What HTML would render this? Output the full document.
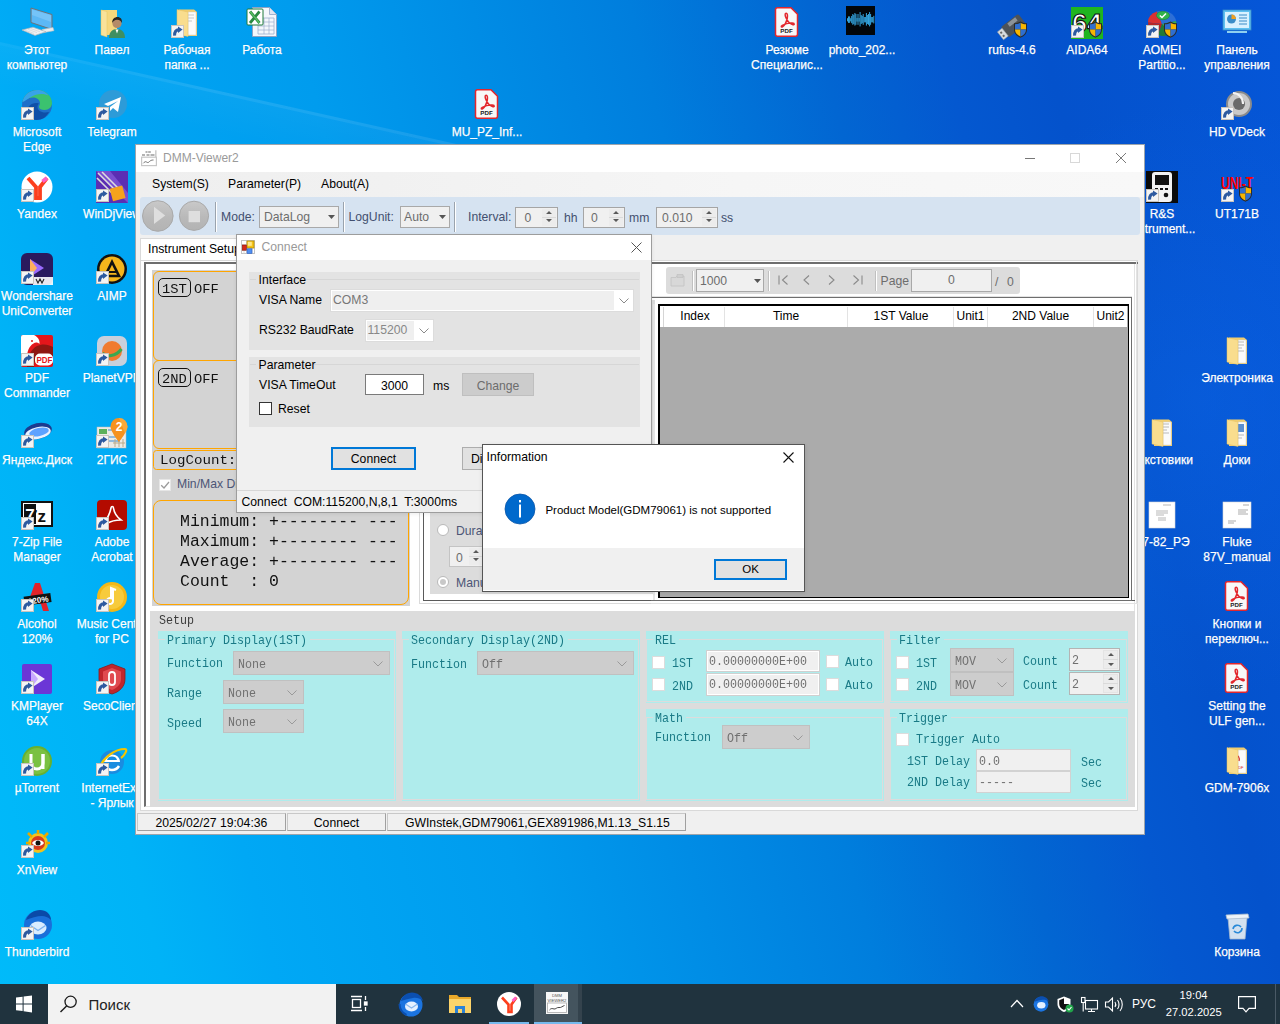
<!DOCTYPE html>
<html><head><meta charset="utf-8"><style>
html,body{margin:0;padding:0;}
body{width:1280px;height:1024px;overflow:hidden;position:relative;font-family:'Liberation Sans',sans-serif;
background:linear-gradient(75.6deg,#00bbfa 0px,#00b3f7 170px,#00a8f5 279px,#009cee 535px,#007edd 863px,#0266d2 1037px,#0458d0 1155px,#0452cc 1255px,#0556d8 1495px);}
.t{position:absolute;white-space:pre;}
.r{position:absolute;box-sizing:border-box;}
.lbl{position:absolute;width:76px;text-align:center;color:#fff;font-size:12px;line-height:15px;font-family:'Liberation Sans',sans-serif;text-shadow:0 0 1px rgba(0,0,0,.12);-webkit-text-stroke:.25px #fff;}
.ic{position:absolute;width:32px;height:32px;}
svg{position:absolute;overflow:visible;}
</style></head><body>
<div class="r" style="left:900px;top:100px;width:600px;height:600px;background:radial-gradient(closest-side,rgba(20,120,255,.22),rgba(20,120,255,0));"></div><div class="r" style="left:0px;top:42px;width:520px;height:3px;background:linear-gradient(90deg,rgba(255,255,255,.06),rgba(255,255,255,.11) 40%,rgba(255,255,255,.09));transform-origin:0 0;transform:rotate(12.6deg);filter:blur(.7px);"></div><div class="r" style="left:0px;top:45px;width:520px;height:40px;background:linear-gradient(180deg,rgba(255,255,255,.035),rgba(255,255,255,0));transform-origin:0 0;transform:rotate(12.6deg);"></div><svg style="left:21px;top:7px" width="32" height="32" viewBox="0 0 32 32"><path d="M10 1L31 7.5V22.5L10 15.5z" fill="#5cb8f5" stroke="#6d7378" stroke-width="1"/><path d="M11 2.5L30 8.3V15L11 8z" fill="#8ed0fb" opacity=".5"/><path d="M21 22.5l11-2 1 3.2-11 2z" fill="#e9ecee" stroke="#b9bec2" stroke-width=".6"/><path d="M1 23l11-2.8 13 4.6-11 3.6z" fill="#eef0f2" stroke="#aeb3b8" stroke-width=".7"/><path d="M4 23.2l9 3.2M7 22.4l9 3.2M10 21.6l9 3.2" stroke="#c4c8cc" stroke-width=".5"/></svg><div class="lbl" style="left:-1px;top:42.7px;">Этот<br>компьютер</div><svg style="left:96px;top:7px" width="32" height="32" viewBox="0 0 32 32"><path d="M5 3h16v25H5z" fill="#f6d77c"/><path d="M5 3l6 1.5V30L5 28z" fill="#f9e29a" stroke="#e6c45e" stroke-width=".5"/><path d="M13 31c0-6 3.5-9 8-9s8 3 8 9z" fill="#3f8f61"/><path d="M19.5 22.5l1.5 4 1.5-4z" fill="#fff"/><circle cx="21" cy="16.5" r="4.6" fill="#b48b68"/><path d="M16.2 16c-.3-4 2.5-6 5.3-6 3 0 5 2.3 4.4 6-.7-1.8-2-3-4.7-3.2-2.3-.1-4 1.2-5 3.2z" fill="#2a2420"/></svg><div class="lbl" style="left:74px;top:42.7px;">Павел</div><svg style="left:171px;top:7px" width="32" height="32" viewBox="0 0 32 32"><path d="M8 2.5h15l3 2.5V29H8z" fill="#f1cd6e"/><path d="M17 5h8v23h-8z" fill="#fbfbfb" stroke="#cfcfcf" stroke-width=".5"/><path d="M14 8h9M14 11h9M14 14h7" stroke="#bbb" stroke-width=".8"/><path d="M6 2.6L17 5V29.5L6 27z" fill="#f9dd8e" stroke="#e5c062" stroke-width=".5"/><rect x="0.5" y="18.5" width="12" height="12" fill="#f4f4f4" stroke="#c9c4be"/><path d="M3.6 28.6C3.4 24.6 5.2 22.7 8.2 22.4" stroke="#2d5aa0" stroke-width="3" fill="none"/><path d="M7 19.4L11.6 22.6L7 26Z" fill="#2d5aa0"/></svg><div class="lbl" style="left:149px;top:42.7px;">Рабочая<br>папка ...</div><svg style="left:246px;top:7px" width="32" height="32" viewBox="0 0 32 32"><path d="M6.5 .5h17l7 7v22h-24z" fill="#f4f7fc" stroke="#8fa3c4" stroke-width="1"/><path d="M23.5 .5v7h7" fill="#dfe6f2" stroke="#8fa3c4" stroke-width=".8"/><path d="M12 11h16v16H12z" fill="none" stroke="#9db0cf" stroke-width=".8"/><path d="M12 15h16M12 19h16M12 23h16M18 11v16M23 11v16" stroke="#9db0cf" stroke-width=".7"/><rect x="1" y="2" width="16" height="16" rx="1" fill="#fff" stroke="#1f7a3a" stroke-width="1"/><path d="M4 4.5l9.5 11.5M13.5 4.5L4 16" stroke="#2a8a42" stroke-width="2.8"/><path d="M4 4.5l9.5 11.5" stroke="#5cbf63" stroke-width="1.3"/></svg><div class="lbl" style="left:224px;top:42.7px;">Работа</div><svg style="left:21px;top:89px" width="32" height="32" viewBox="0 0 32 32"><circle cx="16" cy="16" r="15" fill="#1e6fc8"/><path d="M1.5 13C3 5 10 1 16.5 1c8.5 0 14.5 6.5 14.5 13 0 4-3 7-7.5 7-3 0-5.5-1-5.5-3 0-1.5 1-2 1-4 0-3-3-5.5-7-5.5-5 0-9.5 3.5-10.5 4.5z" fill="#3bc26f"/><path d="M1.5 13C3 5 10 1 16.5 1c5 0 9 2.5 11 5.5C23 4 15 4.5 10 8 6 10 3 13 1.5 13z" fill="#38a3e8"/><path d="M6 23c0-5 4-9 9-9 2 0 3 .5 3 .5-1 1-1.5 2-1.5 3.5 0 3 3 5.5 8 5.5 1 0 2.5-.2 3.5-.5-2.5 5-7 8-12.5 8C10 31 6 27 6 23z" fill="#0f4fa8"/><rect x="0.5" y="18.5" width="12" height="12" fill="#f4f4f4" stroke="#c9c4be"/><path d="M3.6 28.6C3.4 24.6 5.2 22.7 8.2 22.4" stroke="#2d5aa0" stroke-width="3" fill="none"/><path d="M7 19.4L11.6 22.6L7 26Z" fill="#2d5aa0"/></svg><div class="lbl" style="left:-1px;top:124.7px;">Microsoft<br>Edge</div><svg style="left:96px;top:89px" width="32" height="32" viewBox="0 0 32 32"><circle cx="17" cy="15" r="14" fill="#2d9bd8"/><path d="M8 15l17-7-3 15-5-4-3 3v-4l8-6-10 5z" fill="#fff"/><rect x="0.5" y="18.5" width="12" height="12" fill="#f4f4f4" stroke="#c9c4be"/><path d="M3.6 28.6C3.4 24.6 5.2 22.7 8.2 22.4" stroke="#2d5aa0" stroke-width="3" fill="none"/><path d="M7 19.4L11.6 22.6L7 26Z" fill="#2d5aa0"/></svg><div class="lbl" style="left:74px;top:124.7px;">Telegram</div><svg style="left:471px;top:89px" width="32" height="32" viewBox="0 0 32 32"><path d="M6.5 .8h13.5l6.5 6.5v19.9a2 2 0 0 1-2 2H6.5a2 2 0 0 1-2-2V2.8a2 2 0 0 1 2-2z" fill="#f8f8f8" stroke="#e3262c" stroke-width="1.5"/><path d="M15 6.3c-1.3.1-1.1 2.4.3 5.2 1.6 3.1 4.1 5.6 6.6 6.2 1.6.4 1.9-1.3-.2-1.6-3-.5-7.2.5-10.4 2.4-1.6 1-1.2 2.3.4 1.1 2.1-1.7 4-5.3 4.6-8.6.4-2.4.2-4.8-1.3-4.7z" fill="none" stroke="#e3262c" stroke-width="1.5"/><text x="15.5" y="26" font-family="Liberation Sans" font-size="6.2" font-weight="bold" text-anchor="middle" fill="#222">PDF</text></svg><div class="lbl" style="left:449px;top:124.7px;">MU_PZ_Inf...</div><svg style="left:21px;top:171px" width="32" height="32" viewBox="0 0 32 32"><circle cx="16" cy="16" r="15.5" fill="#fff"/><path d="M7 7l8 9v11h4V16l7-9" stroke="#fc3f1d" stroke-width="3.8" fill="none"/><path d="M21.5 10.5L26 7" stroke="#ff5fc8" stroke-width="3.8"/><rect x="0.5" y="18.5" width="12" height="12" fill="#f4f4f4" stroke="#c9c4be"/><path d="M3.6 28.6C3.4 24.6 5.2 22.7 8.2 22.4" stroke="#2d5aa0" stroke-width="3" fill="none"/><path d="M7 19.4L11.6 22.6L7 26Z" fill="#2d5aa0"/></svg><div class="lbl" style="left:-1px;top:206.7px;">Yandex</div><svg style="left:96px;top:171px" width="32" height="32" viewBox="0 0 32 32"><rect x="0" y="0" width="32" height="32" fill="#5b2eb3"/><path d="M0 0h14L32 22V32L0 0z" fill="#7a4fd0"/><path d="M2 2l16 16M6 1l16 16M1 7l15 15" stroke="#ddd" stroke-width="1.6"/><rect x="15" y="16" width="13" height="13" transform="rotate(-15 21 22)" fill="#f5a21c"/><rect x="0.5" y="18.5" width="12" height="12" fill="#f4f4f4" stroke="#c9c4be"/><path d="M3.6 28.6C3.4 24.6 5.2 22.7 8.2 22.4" stroke="#2d5aa0" stroke-width="3" fill="none"/><path d="M7 19.4L11.6 22.6L7 26Z" fill="#2d5aa0"/></svg><div class="lbl" style="left:74px;top:206.7px;">WinDjView</div><svg style="left:21px;top:253px" width="32" height="32" viewBox="0 0 32 32"><rect x="0" y="0" width="32" height="32" rx="6" fill="#2a1a5e"/><path d="M9 6l14 9-14 9z" fill="#9b6bff"/><path d="M9 6l7 9-7 9z" fill="#ffb05c"/><path d="M0 26h32v6H0z" fill="#f0f0f0" opacity=".0"/><path d="M14 27l2 3 2-3 2 3 2-3" stroke="#111" stroke-width="1.2" fill="none"/><path d="M12 24h20v8H12z" fill="#fff" opacity=".9"/><path d="M15 26l2 4 2-4 2 4 2-4" stroke="#222" stroke-width="1.1" fill="none"/><rect x="0.5" y="18.5" width="12" height="12" fill="#f4f4f4" stroke="#c9c4be"/><path d="M3.6 28.6C3.4 24.6 5.2 22.7 8.2 22.4" stroke="#2d5aa0" stroke-width="3" fill="none"/><path d="M7 19.4L11.6 22.6L7 26Z" fill="#2d5aa0"/></svg><div class="lbl" style="left:-1px;top:288.7px;">Wondershare<br>UniConverter</div><svg style="left:96px;top:253px" width="32" height="32" viewBox="0 0 32 32"><circle cx="16" cy="16" r="15" fill="#111"/><circle cx="16" cy="16" r="12.5" fill="#f5b51c"/><path d="M9 23L16 9l7 14z" fill="none" stroke="#111" stroke-width="2.6"/><path d="M12 19h8" stroke="#111" stroke-width="2"/><rect x="0.5" y="18.5" width="12" height="12" fill="#f4f4f4" stroke="#c9c4be"/><path d="M3.6 28.6C3.4 24.6 5.2 22.7 8.2 22.4" stroke="#2d5aa0" stroke-width="3" fill="none"/><path d="M7 19.4L11.6 22.6L7 26Z" fill="#2d5aa0"/></svg><div class="lbl" style="left:74px;top:288.7px;">AIMP</div><svg style="left:21px;top:335px" width="32" height="32" viewBox="0 0 32 32"><rect x="0" y="0" width="32" height="32" rx="2" fill="#e3161b"/><path d="M0 2a2 2 0 0 1 2-2h11c4 2 6 5 5.5 9-1.5-1.5-4-2-6-.5C8 11 6 17 6 22H0z" fill="#fff"/><path d="M6 32c0-10 4-18 10-21 5-2.5 11-2 16 1V22c-4-4-10-4-14-1-3 2-5 6-5 11z" fill="#8e1712"/><circle cx="11" cy="6" r=".9" fill="#d00"/><rect x="14" y="18.5" width="18" height="12" rx="5" fill="#fff"/><text x="23.5" y="28.3" font-family="Liberation Sans" font-weight="bold" font-size="9" text-anchor="middle" fill="#e3161b" textLength="16" lengthAdjust="spacingAndGlyphs">PDF</text><rect x="0.5" y="18.5" width="12" height="12" fill="#f4f4f4" stroke="#c9c4be"/><path d="M3.6 28.6C3.4 24.6 5.2 22.7 8.2 22.4" stroke="#2d5aa0" stroke-width="3" fill="none"/><path d="M7 19.4L11.6 22.6L7 26Z" fill="#2d5aa0"/></svg><div class="lbl" style="left:-1px;top:370.7px;">PDF<br>Commander</div><svg style="left:96px;top:335px" width="32" height="32" viewBox="0 0 32 32"><rect x="1" y="1" width="30" height="30" rx="7" fill="#c8d0dc"/><circle cx="16" cy="16" r="10" fill="#f07b30"/><path d="M6.5 18c4 4 13 4 19-4" stroke="#3aa850" stroke-width="3" fill="none"/><rect x="0.5" y="18.5" width="12" height="12" fill="#f4f4f4" stroke="#c9c4be"/><path d="M3.6 28.6C3.4 24.6 5.2 22.7 8.2 22.4" stroke="#2d5aa0" stroke-width="3" fill="none"/><path d="M7 19.4L11.6 22.6L7 26Z" fill="#2d5aa0"/></svg><div class="lbl" style="left:74px;top:370.7px;">PlanetVPN</div><svg style="left:21px;top:417px" width="32" height="32" viewBox="0 0 32 32"><ellipse cx="17" cy="14" rx="14" ry="8" transform="rotate(-12 17 14)" fill="#1c3b8f"/><ellipse cx="17" cy="16" rx="13" ry="6" transform="rotate(-12 17 16)" fill="#e9f2ff"/><ellipse cx="18" cy="15" rx="10" ry="4" transform="rotate(-12 18 15)" fill="#5ea2ff"/><rect x="0.5" y="18.5" width="12" height="12" fill="#f4f4f4" stroke="#c9c4be"/><path d="M3.6 28.6C3.4 24.6 5.2 22.7 8.2 22.4" stroke="#2d5aa0" stroke-width="3" fill="none"/><path d="M7 19.4L11.6 22.6L7 26Z" fill="#2d5aa0"/></svg><div class="lbl" style="left:-1px;top:452.7px;">Яндекс.Диск</div><svg style="left:96px;top:417px" width="32" height="32" viewBox="0 0 32 32"><rect x="1" y="10" width="29" height="21" fill="#ecebe6" stroke="#bbb" stroke-width=".5"/><path d="M3 12h8v5H3z" fill="#5cb05c"/><path d="M12 13h10M8 20h14M4 24h20" stroke="#3a8ad0" stroke-width="1.2"/><path d="M17 26h12M19 22v8M23 22v8M27 22v8" stroke="#b9a98a" stroke-width="1"/><path d="M23 1a8.5 8.5 0 0 1 8.5 8.5c0 5-8.5 15.5-8.5 15.5S14.5 14.5 14.5 9.5A8.5 8.5 0 0 1 23 1z" fill="#f6921e"/><path d="M23 1a8.5 8.5 0 0 1 8.5 8.5c0 2-1 4.5-2.5 7" fill="#fdb94a" opacity=".6"/><text x="23" y="14" font-family="Liberation Sans" font-weight="bold" font-size="12" text-anchor="middle" fill="#fff">2</text><rect x="0.5" y="18.5" width="12" height="12" fill="#f4f4f4" stroke="#c9c4be"/><path d="M3.6 28.6C3.4 24.6 5.2 22.7 8.2 22.4" stroke="#2d5aa0" stroke-width="3" fill="none"/><path d="M7 19.4L11.6 22.6L7 26Z" fill="#2d5aa0"/></svg><div class="lbl" style="left:74px;top:452.7px;">2ГИС</div><svg style="left:21px;top:499px" width="32" height="32" viewBox="0 0 32 32"><rect x="1" y="3" width="30" height="24" fill="#fff" stroke="#111" stroke-width="2"/><text x="16" y="23" font-family="Liberation Sans" font-weight="bold" font-size="17" text-anchor="middle" fill="#111">7z</text><rect x="3" y="5" width="12" height="20" fill="#111"/><text x="9" y="22" font-family="Liberation Sans" font-weight="bold" font-size="17" text-anchor="middle" fill="#fff">7</text><rect x="0.5" y="18.5" width="12" height="12" fill="#f4f4f4" stroke="#c9c4be"/><path d="M3.6 28.6C3.4 24.6 5.2 22.7 8.2 22.4" stroke="#2d5aa0" stroke-width="3" fill="none"/><path d="M7 19.4L11.6 22.6L7 26Z" fill="#2d5aa0"/></svg><div class="lbl" style="left:-1px;top:534.7px;">7-Zip File<br>Manager</div><svg style="left:96px;top:499px" width="32" height="32" viewBox="0 0 32 32"><rect x="1" y="1" width="30" height="30" rx="4" fill="#b30b00"/><path d="M8 24c3-4 6-10 7-15 .3-2 2.3-2 2.5 0 .5 4 3.5 9 7.5 12-4 0-10 1-14 3.5-2 1.2-4 .5-3-.5z" fill="none" stroke="#fff" stroke-width="1.6"/><rect x="0.5" y="18.5" width="12" height="12" fill="#f4f4f4" stroke="#c9c4be"/><path d="M3.6 28.6C3.4 24.6 5.2 22.7 8.2 22.4" stroke="#2d5aa0" stroke-width="3" fill="none"/><path d="M7 19.4L11.6 22.6L7 26Z" fill="#2d5aa0"/></svg><div class="lbl" style="left:74px;top:534.7px;">Adobe<br>Acrobat</div><svg style="left:21px;top:581px" width="32" height="32" viewBox="0 0 32 32"><path d="M4 30L14 2h5l9 28h-6l-2-7H12l-2 7z" fill="#e2232a"/><rect x="3" y="14" width="27" height="9" fill="#111" transform="rotate(-8 16 18)"/><text x="17" y="22" font-family="Liberation Sans" font-weight="bold" font-size="8" text-anchor="middle" fill="#fff" transform="rotate(-8 16 18)">120%</text><rect x="0.5" y="18.5" width="12" height="12" fill="#f4f4f4" stroke="#c9c4be"/><path d="M3.6 28.6C3.4 24.6 5.2 22.7 8.2 22.4" stroke="#2d5aa0" stroke-width="3" fill="none"/><path d="M7 19.4L11.6 22.6L7 26Z" fill="#2d5aa0"/></svg><div class="lbl" style="left:-1px;top:616.7px;">Alcohol<br>120%</div><svg style="left:96px;top:581px" width="32" height="32" viewBox="0 0 32 32"><circle cx="16" cy="16" r="15" fill="#f3b818"/><circle cx="16" cy="16" r="12" fill="#f7cb3c"/><path d="M17 7v13a3 3 0 1 1-2-2.8V7l5 2" stroke="#fff" stroke-width="2" fill="none"/><rect x="0.5" y="18.5" width="12" height="12" fill="#f4f4f4" stroke="#c9c4be"/><path d="M3.6 28.6C3.4 24.6 5.2 22.7 8.2 22.4" stroke="#2d5aa0" stroke-width="3" fill="none"/><path d="M7 19.4L11.6 22.6L7 26Z" fill="#2d5aa0"/></svg><div class="lbl" style="left:74px;top:616.7px;">Music Center<br>for PC</div><svg style="left:21px;top:663px" width="32" height="32" viewBox="0 0 32 32"><rect x="1" y="1" width="30" height="30" rx="2" fill="#6b36d6"/><path d="M10 7l14 9-14 9z" fill="#fff" opacity=".9"/><path d="M10 7l7 9-7 9z" fill="#c9a8ff"/><rect x="0.5" y="18.5" width="12" height="12" fill="#f4f4f4" stroke="#c9c4be"/><path d="M3.6 28.6C3.4 24.6 5.2 22.7 8.2 22.4" stroke="#2d5aa0" stroke-width="3" fill="none"/><path d="M7 19.4L11.6 22.6L7 26Z" fill="#2d5aa0"/></svg><div class="lbl" style="left:-1px;top:698.7px;">KMPlayer<br>64X</div><svg style="left:96px;top:663px" width="32" height="32" viewBox="0 0 32 32"><path d="M16 1l13 5v10c0 8-6 13-13 15C9 29 3 24 3 16V6z" fill="#c0262d" stroke="#8a1a1a" stroke-width=".8"/><path d="M16 5l9 3.5V16c0 5.5-4 9-9 11-5-2-9-5.5-9-11V8.5z" fill="#e04a50"/><rect x="13" y="9" width="6" height="13" rx="3" fill="none" stroke="#fff" stroke-width="1.8"/><rect x="0.5" y="18.5" width="12" height="12" fill="#f4f4f4" stroke="#c9c4be"/><path d="M3.6 28.6C3.4 24.6 5.2 22.7 8.2 22.4" stroke="#2d5aa0" stroke-width="3" fill="none"/><path d="M7 19.4L11.6 22.6L7 26Z" fill="#2d5aa0"/></svg><div class="lbl" style="left:74px;top:698.7px;">SecoClient</div><svg style="left:21px;top:745px" width="32" height="32" viewBox="0 0 32 32"><circle cx="16" cy="16" r="15" fill="#68b030"/><circle cx="16" cy="16" r="13" fill="#7ac142"/><path d="M10 9v9a6 6 0 0 0 12 0V9" stroke="#fff" stroke-width="3" fill="none"/><path d="M22 9v15" stroke="#fff" stroke-width="3"/><rect x="0.5" y="18.5" width="12" height="12" fill="#f4f4f4" stroke="#c9c4be"/><path d="M3.6 28.6C3.4 24.6 5.2 22.7 8.2 22.4" stroke="#2d5aa0" stroke-width="3" fill="none"/><path d="M7 19.4L11.6 22.6L7 26Z" fill="#2d5aa0"/></svg><div class="lbl" style="left:-1px;top:780.7px;">µTorrent</div><svg style="left:96px;top:745px" width="32" height="32" viewBox="0 0 32 32"><circle cx="16" cy="17" r="12" fill="#1a8ce0"/><path d="M8 17h16c0-4.5-3.5-7.5-8-7.5S8 12.5 8 17z" fill="#fff"/><path d="M11 15h10c-.5-2.5-2.5-3.5-5-3.5s-4.5 1-5 3.5z" fill="#1a8ce0"/><path d="M9 21c2 3 4.5 4 7 4 3 0 5.5-1.5 7-4" stroke="#fff" stroke-width="2.5" fill="none"/><path d="M3 25C6 12 20 4 29 4c3 0 0 6-4 9" stroke="#f5c400" stroke-width="2.2" fill="none"/><rect x="0.5" y="18.5" width="12" height="12" fill="#f4f4f4" stroke="#c9c4be"/><path d="M3.6 28.6C3.4 24.6 5.2 22.7 8.2 22.4" stroke="#2d5aa0" stroke-width="3" fill="none"/><path d="M7 19.4L11.6 22.6L7 26Z" fill="#2d5aa0"/></svg><div class="lbl" style="left:74px;top:780.7px;">InternetExp<br>- Ярлык</div><svg style="left:21px;top:827px" width="32" height="32" viewBox="0 0 32 32"><circle cx="17" cy="16" r="10" fill="#f3c21c"/><path d="M7 6l4 4M27 6l-4 4M5 16h4M25 16h4M17 3v4" stroke="#e8a800" stroke-width="2.5"/><circle cx="17" cy="16" r="7" fill="#d73b1f"/><path d="M11 16c2-4 10-4 12 0-2 4-10 4-12 0z" fill="#fff"/><circle cx="17" cy="16" r="2.5" fill="#111"/><rect x="0.5" y="18.5" width="12" height="12" fill="#f4f4f4" stroke="#c9c4be"/><path d="M3.6 28.6C3.4 24.6 5.2 22.7 8.2 22.4" stroke="#2d5aa0" stroke-width="3" fill="none"/><path d="M7 19.4L11.6 22.6L7 26Z" fill="#2d5aa0"/></svg><div class="lbl" style="left:-1px;top:862.7px;">XnView</div><svg style="left:21px;top:909px" width="32" height="32" viewBox="0 0 32 32"><circle cx="17" cy="16" r="14" fill="#1a6fd9"/><path d="M5 11c2-6 8-10 14-10 6 0 11 4 11 10-3-3-6-4-9-4-5 0-11 2-16 4z" fill="#0a4aa8"/><ellipse cx="17" cy="19" rx="8.5" ry="6.5" fill="#d9ecff"/><path d="M9.5 16.5l7.5 5 7.5-5" stroke="#7ab2f0" stroke-width="1.4" fill="none"/><rect x="0.5" y="18.5" width="12" height="12" fill="#f4f4f4" stroke="#c9c4be"/><path d="M3.6 28.6C3.4 24.6 5.2 22.7 8.2 22.4" stroke="#2d5aa0" stroke-width="3" fill="none"/><path d="M7 19.4L11.6 22.6L7 26Z" fill="#2d5aa0"/></svg><div class="lbl" style="left:-1px;top:944.7px;">Thunderbird</div><svg style="left:771px;top:7px" width="32" height="32" viewBox="0 0 32 32"><path d="M6.5 .8h13.5l6.5 6.5v19.9a2 2 0 0 1-2 2H6.5a2 2 0 0 1-2-2V2.8a2 2 0 0 1 2-2z" fill="#f8f8f8" stroke="#e3262c" stroke-width="1.5"/><path d="M15 6.3c-1.3.1-1.1 2.4.3 5.2 1.6 3.1 4.1 5.6 6.6 6.2 1.6.4 1.9-1.3-.2-1.6-3-.5-7.2.5-10.4 2.4-1.6 1-1.2 2.3.4 1.1 2.1-1.7 4-5.3 4.6-8.6.4-2.4.2-4.8-1.3-4.7z" fill="none" stroke="#e3262c" stroke-width="1.5"/><text x="15.5" y="26" font-family="Liberation Sans" font-size="6.2" font-weight="bold" text-anchor="middle" fill="#222">PDF</text></svg><div class="lbl" style="left:749px;top:42.7px;">Резюме<br>Специалис...</div><svg style="left:846px;top:7px" width="32" height="32" viewBox="0 0 32 32"><defs><filter id="pb" x="-10%" y="-10%" width="120%" height="120%"><feGaussianBlur stdDeviation=".6"/></filter></defs><rect x="0" y="-1" width="29" height="29" fill="#02060a"/><path d="M1.5 11.2V14.4M2.5 9.4V15.9M3.6 9.4V15.9M4.7 11.2V14.4M5.7 9.0V16.2M6.8 7.0V17.8M7.8 8.0V17.0M8.9 6.0V18.6M9.9 7.0V17.8M11.0 11.0V14.6M12.0 7.0V17.8M13.1 11.0V14.6M14.1 5.0V19.4M15.2 8.0V17.0M16.2 9.0V16.2M17.2 7.0V17.8M18.3 10.0V15.4M19.4 10.0V15.4M20.4 6.0V18.6M21.4 8.0V17.0M22.5 7.0V17.8M23.6 5.0V19.4M24.6 7.0V17.8M25.7 10.0V15.4M26.7 10.0V15.4M27.8 8.8V16.4" stroke="#39b4f4" stroke-width=".9" filter="url(#pb)"/><path d="M1 13H28" stroke="#7fd4ff" stroke-width=".8" filter="url(#pb)"/></svg><div class="lbl" style="left:824px;top:42.7px;">photo_202...</div><svg style="left:996px;top:7px" width="32" height="32" viewBox="0 0 32 32"><g transform="rotate(-38 16 16)"><rect x="9" y="8" width="13" height="22" rx="2" transform="rotate(90 15.5 19)" fill="#4d5359"/><rect x="12" y="13.5" width="10" height="4" fill="#8c9399"/><rect x="-1" y="14" width="6" height="10" fill="#d7dbde" stroke="#9aa0a5" stroke-width=".5"/><rect x="0.5" y="16" width="2" height="2" fill="#666"/><rect x="0.5" y="20" width="2" height="2" fill="#666"/></g><path d="M24.5 14.5c2 1.3 4.3 1.8 6.5 1.8v6.2c0 4.2-2.8 6.8-6.5 8.2-3.7-1.4-6.5-4-6.5-8.2v-6.2c2.2 0 4.5-.5 6.5-1.8z" fill="#2a2a2a"/><path d="M24.5 15.8c1.8 1 3.8 1.5 5.5 1.5v5.2h-5.5z" fill="#f7b500"/><path d="M24.5 15.8c-1.8 1-3.8 1.5-5.5 1.5v5.2h5.5z" fill="#2f6fd0"/><path d="M19 22.5h5.5v7c-3-1.2-5.5-3.3-5.5-7z" fill="#f7b500"/><path d="M30 22.5h-5.5v7c3-1.2 5.5-3.3 5.5-7z" fill="#2f6fd0"/></svg><div class="lbl" style="left:974px;top:42.7px;">rufus-4.6</div><svg style="left:1071px;top:7px" width="32" height="32" viewBox="0 0 32 32"><rect x="0" y="0" width="32" height="32" fill="#1fb51f"/><text x="16" y="25" font-family="Liberation Sans" font-weight="bold" font-size="25" text-anchor="middle" fill="#fff" stroke="#111" stroke-width="1.1" textLength="30" lengthAdjust="spacingAndGlyphs">64</text><rect x="0.5" y="18.5" width="12" height="12" fill="#f4f4f4" stroke="#c9c4be"/><path d="M3.6 28.6C3.4 24.6 5.2 22.7 8.2 22.4" stroke="#2d5aa0" stroke-width="3" fill="none"/><path d="M7 19.4L11.6 22.6L7 26Z" fill="#2d5aa0"/><path d="M24.5 14.5c2 1.3 4.3 1.8 6.5 1.8v6.2c0 4.2-2.8 6.8-6.5 8.2-3.7-1.4-6.5-4-6.5-8.2v-6.2c2.2 0 4.5-.5 6.5-1.8z" fill="#2a2a2a"/><path d="M24.5 15.8c1.8 1 3.8 1.5 5.5 1.5v5.2h-5.5z" fill="#f7b500"/><path d="M24.5 15.8c-1.8 1-3.8 1.5-5.5 1.5v5.2h5.5z" fill="#2f6fd0"/><path d="M19 22.5h5.5v7c-3-1.2-5.5-3.3-5.5-7z" fill="#f7b500"/><path d="M30 22.5h-5.5v7c3-1.2 5.5-3.3 5.5-7z" fill="#2f6fd0"/></svg><div class="lbl" style="left:1049px;top:42.7px;">AIDA64</div><svg style="left:1146px;top:7px" width="32" height="32" viewBox="0 0 32 32"><path d="M16 17L2 15.5A14 11 0 0 1 11 4.5z" fill="#d93131"/><path d="M16 17L11 4.5A14 11 0 0 1 30 14z" fill="#2d6fd6"/><path d="M16 17L30 14A14 12 0 0 1 25 27z" fill="#3bab4c"/><path d="M16 17L2 15.5A14 12 0 0 0 12 28z" fill="#b52626"/><path d="M12 28L16 17L25 27A14 12 0 0 1 12 28z" fill="#237a34"/><ellipse cx="17" cy="8.5" rx="6.5" ry="4.2" fill="#32b34a" stroke="#1e7d30" stroke-width=".5"/><path d="M13.8 8.5l2.2 2 4-4" stroke="#fff" stroke-width="1.5" fill="none"/><rect x="0.5" y="18.5" width="12" height="12" fill="#f4f4f4" stroke="#c9c4be"/><path d="M3.6 28.6C3.4 24.6 5.2 22.7 8.2 22.4" stroke="#2d5aa0" stroke-width="3" fill="none"/><path d="M7 19.4L11.6 22.6L7 26Z" fill="#2d5aa0"/><path d="M24.5 14.5c2 1.3 4.3 1.8 6.5 1.8v6.2c0 4.2-2.8 6.8-6.5 8.2-3.7-1.4-6.5-4-6.5-8.2v-6.2c2.2 0 4.5-.5 6.5-1.8z" fill="#2a2a2a"/><path d="M24.5 15.8c1.8 1 3.8 1.5 5.5 1.5v5.2h-5.5z" fill="#f7b500"/><path d="M24.5 15.8c-1.8 1-3.8 1.5-5.5 1.5v5.2h5.5z" fill="#2f6fd0"/><path d="M19 22.5h5.5v7c-3-1.2-5.5-3.3-5.5-7z" fill="#f7b500"/><path d="M30 22.5h-5.5v7c3-1.2 5.5-3.3 5.5-7z" fill="#2f6fd0"/></svg><div class="lbl" style="left:1124px;top:42.7px;">AOMEI<br>Partitio...</div><svg style="left:1221px;top:7px" width="32" height="32" viewBox="0 0 32 32"><rect x="2" y="3" width="28" height="20" fill="#5ec0f0" stroke="#3a8cc8" stroke-width=".8"/><rect x="4" y="5" width="24" height="16" fill="#d9f1ff"/><circle cx="10.5" cy="12" r="4.5" fill="#3a8cc8"/><path d="M10.5 12V7.5a4.5 4.5 0 0 1 4.5 4.5z" fill="#f0a020"/><path d="M18 8h8M18 11h8M18 14h8M18 17h8" stroke="#3a8cc8" stroke-width="1.2"/><rect x="6" y="24" width="20" height="2" fill="#8fd0f0"/></svg><div class="lbl" style="left:1199px;top:42.7px;">Панель<br>управления</div><svg style="left:1221px;top:89px" width="32" height="32" viewBox="0 0 32 32"><circle cx="18" cy="15" r="13" fill="#8b8b8b"/><circle cx="18" cy="15" r="11" fill="#c9c9c9"/><circle cx="18" cy="15" r="6" fill="#6a6a6a"/><path d="M12 4c6 0 10 5 10 11" stroke="#f2f2f2" stroke-width="2" fill="none"/><rect x="0.5" y="18.5" width="12" height="12" fill="#f4f4f4" stroke="#c9c4be"/><path d="M3.6 28.6C3.4 24.6 5.2 22.7 8.2 22.4" stroke="#2d5aa0" stroke-width="3" fill="none"/><path d="M7 19.4L11.6 22.6L7 26Z" fill="#2d5aa0"/></svg><div class="lbl" style="left:1199px;top:124.7px;">HD VDeck</div><svg style="left:1146px;top:171px" width="32" height="32" viewBox="0 0 32 32"><rect x="0" y="0" width="32" height="32" fill="#0a0a0a"/><rect x="6" y="1" width="20" height="30" rx="3" fill="#f2f2f2"/><rect x="9" y="4" width="14" height="10" fill="#111"/><path d="M9 17h3v2H9zM14 17h3v2h-3zM19 17h3v2h-3zM9 21h3v2H9z" fill="#111"/><circle cx="20" cy="24" r="2.3" fill="#111"/><rect x="0.5" y="18.5" width="12" height="12" fill="#f4f4f4" stroke="#c9c4be"/><path d="M3.6 28.6C3.4 24.6 5.2 22.7 8.2 22.4" stroke="#2d5aa0" stroke-width="3" fill="none"/><path d="M7 19.4L11.6 22.6L7 26Z" fill="#2d5aa0"/></svg><div class="lbl" style="left:1124px;top:206.7px;">R&amp;S<br>Instrument...</div><svg style="left:1221px;top:171px" width="32" height="32" viewBox="0 0 32 32"><text x="16" y="17.5" font-family="Liberation Sans" font-weight="bold" font-size="17" text-anchor="middle" fill="#ff0000" textLength="32" lengthAdjust="spacingAndGlyphs">UNI-T</text><rect x="0.5" y="18.5" width="12" height="12" fill="#f4f4f4" stroke="#c9c4be"/><path d="M3.6 28.6C3.4 24.6 5.2 22.7 8.2 22.4" stroke="#2d5aa0" stroke-width="3" fill="none"/><path d="M7 19.4L11.6 22.6L7 26Z" fill="#2d5aa0"/><path d="M24.5 14.5c2 1.3 4.3 1.8 6.5 1.8v6.2c0 4.2-2.8 6.8-6.5 8.2-3.7-1.4-6.5-4-6.5-8.2v-6.2c2.2 0 4.5-.5 6.5-1.8z" fill="#2a2a2a"/><path d="M24.5 15.8c1.8 1 3.8 1.5 5.5 1.5v5.2h-5.5z" fill="#f7b500"/><path d="M24.5 15.8c-1.8 1-3.8 1.5-5.5 1.5v5.2h5.5z" fill="#2f6fd0"/><path d="M19 22.5h5.5v7c-3-1.2-5.5-3.3-5.5-7z" fill="#f7b500"/><path d="M30 22.5h-5.5v7c3-1.2 5.5-3.3 5.5-7z" fill="#2f6fd0"/></svg><div class="lbl" style="left:1199px;top:206.7px;">UT171B</div><svg style="left:1221px;top:335px" width="32" height="32" viewBox="0 0 32 32"><path d="M8 2.5h15l3 2.5V29H8z" fill="#f1cd6e"/><path d="M17 5h8v23h-8z" fill="#fbfbfb" stroke="#cfcfcf" stroke-width=".5"/><path d="M14 7h9M14 10h9M14 13h7M14 16h9" stroke="#aaa" stroke-width=".8"/><path d="M6 2.6L17 5V29.5L6 27z" fill="#f9dd8e" stroke="#e5c062" stroke-width=".5"/></svg><div class="lbl" style="left:1199px;top:370.7px;">Электроника</div><svg style="left:1146px;top:417px" width="32" height="32" viewBox="0 0 32 32"><path d="M8 2.5h15l3 2.5V29H8z" fill="#f1cd6e"/><path d="M17 5h8v23h-8z" fill="#fbfbfb" stroke="#cfcfcf" stroke-width=".5"/><path d="M14 7h9M14 10h9M14 13h7M14 16h9" stroke="#aaa" stroke-width=".8"/><path d="M6 2.6L17 5V29.5L6 27z" fill="#f9dd8e" stroke="#e5c062" stroke-width=".5"/></svg><div class="lbl" style="left:1124px;top:452.7px;">Текстовики</div><svg style="left:1221px;top:417px" width="32" height="32" viewBox="0 0 32 32"><path d="M8 2.5h15l3 2.5V29H8z" fill="#f1cd6e"/><path d="M17 5h8v23h-8z" fill="#fbfbfb" stroke="#cfcfcf" stroke-width=".5"/><rect x="14" y="7" width="9" height="8" fill="#5b8fd0"/><path d="M14 18h9M14 21h7" stroke="#aaa" stroke-width=".8"/><path d="M6 2.6L17 5V29.5L6 27z" fill="#f9dd8e" stroke="#e5c062" stroke-width=".5"/></svg><div class="lbl" style="left:1199px;top:452.7px;">Доки</div><svg style="left:1146px;top:499px" width="32" height="32" viewBox="0 0 32 32"><rect x="3" y="3" width="26" height="26" fill="#fff" stroke="#d8d8d8" stroke-width=".6"/><path d="M17 6h8M10 12h12M10 14h12M10 16h8M12 19h8M12 21h8" stroke="#888" stroke-width=".6"/></svg><div class="lbl" style="left:1124px;top:534.7px;">В7-82_РЭ</div><svg style="left:1221px;top:499px" width="32" height="32" viewBox="0 0 32 32"><rect x="2" y="3" width="28" height="26" fill="#fff" stroke="#d8d8d8" stroke-width=".6"/><path d="M22 6h6M17 11h10M17 13h8M17 15h10M7 22h8M7 24h6" stroke="#888" stroke-width=".7"/></svg><div class="lbl" style="left:1199px;top:534.7px;">Fluke<br>87V_manual</div><svg style="left:1221px;top:581px" width="32" height="32" viewBox="0 0 32 32"><path d="M6.5 .8h13.5l6.5 6.5v19.9a2 2 0 0 1-2 2H6.5a2 2 0 0 1-2-2V2.8a2 2 0 0 1 2-2z" fill="#f8f8f8" stroke="#e3262c" stroke-width="1.5"/><path d="M15 6.3c-1.3.1-1.1 2.4.3 5.2 1.6 3.1 4.1 5.6 6.6 6.2 1.6.4 1.9-1.3-.2-1.6-3-.5-7.2.5-10.4 2.4-1.6 1-1.2 2.3.4 1.1 2.1-1.7 4-5.3 4.6-8.6.4-2.4.2-4.8-1.3-4.7z" fill="none" stroke="#e3262c" stroke-width="1.5"/><text x="15.5" y="26" font-family="Liberation Sans" font-size="6.2" font-weight="bold" text-anchor="middle" fill="#222">PDF</text></svg><div class="lbl" style="left:1199px;top:616.7px;">Кнопки и<br>переключ...</div><svg style="left:1221px;top:663px" width="32" height="32" viewBox="0 0 32 32"><path d="M6.5 .8h13.5l6.5 6.5v19.9a2 2 0 0 1-2 2H6.5a2 2 0 0 1-2-2V2.8a2 2 0 0 1 2-2z" fill="#f8f8f8" stroke="#e3262c" stroke-width="1.5"/><path d="M15 6.3c-1.3.1-1.1 2.4.3 5.2 1.6 3.1 4.1 5.6 6.6 6.2 1.6.4 1.9-1.3-.2-1.6-3-.5-7.2.5-10.4 2.4-1.6 1-1.2 2.3.4 1.1 2.1-1.7 4-5.3 4.6-8.6.4-2.4.2-4.8-1.3-4.7z" fill="none" stroke="#e3262c" stroke-width="1.5"/><text x="15.5" y="26" font-family="Liberation Sans" font-size="6.2" font-weight="bold" text-anchor="middle" fill="#222">PDF</text></svg><div class="lbl" style="left:1199px;top:698.7px;">Setting the<br>ULF gen...</div><svg style="left:1221px;top:745px" width="32" height="32" viewBox="0 0 32 32"><path d="M8 2.5h15l3 2.5V29H8z" fill="#f1cd6e"/><path d="M17 5h8v23h-8z" fill="#fbfbfb" stroke="#cfcfcf" stroke-width=".5"/><path d="M15 10c2 0 4 3 3 6" stroke="#d02020" stroke-width="1.2" fill="none"/><text x="18.5" y="24" font-family="Liberation Sans" font-size="4" text-anchor="middle" fill="#d02020">PDF</text><path d="M6 2.6L17 5V29.5L6 27z" fill="#f9dd8e" stroke="#e5c062" stroke-width=".5"/></svg><div class="lbl" style="left:1199px;top:780.7px;">GDM-7906x</div><svg style="left:1221px;top:909px" width="32" height="32" viewBox="0 0 32 32"><path d="M7 9h19l-2 21H9z" fill="#dfe9f2" stroke="#aebfd0" stroke-width=".8" opacity=".95"/><path d="M5 6l22-1 1 4-22 1z" fill="#eef3f8" stroke="#aebfd0" stroke-width=".8"/><path d="M12 20a4.5 4.5 0 0 1 8-2M21 19a4.5 4.5 0 0 1-8 3" stroke="#2a8ad8" stroke-width="1.6" fill="none"/></svg><div class="lbl" style="left:1199px;top:944.7px;">Корзина</div><div class="r" style="left:135px;top:144px;width:1010px;height:691px;background:#f0f0f0;border:1px solid rgba(30,50,70,.4);"></div><div class="r" style="left:136px;top:145px;width:1008px;height:27px;background:#fff;"></div><svg style="left:141px;top:150px" width="16" height="16" viewBox="0 0 16 16">
<path d="M14 .2h1.6V15.7H14z" fill="#cfcfcf"/>
<path d="M4.5 1.2h2v1.6h-2zM7.2 1.2h2.6v1.6H7.2z" fill="#9a9a9a"/>
<path d="M1 4.2h3v1.6H1zM5.5 4.2h3v1.6h-3zM9.5 4.2h4v1.6h-4z" fill="#9a9a9a"/>
<rect x=".6" y="7.2" width="14.8" height="8.4" fill="#fff" stroke="#c6c6c6" stroke-width="1.2"/>
<path d="M2.3 13.3C3.5 11.8 4.5 11.3 5.5 12 6.6 12.8 7.5 12.8 8.5 11.5 9.5 10.5 10.5 10 12.5 10" stroke="#666" stroke-width=".9" fill="none"/>
</svg><div class="t" style="left:163px;top:151.84px;font-family:'Liberation Sans',sans-serif;font-size:12px;line-height:12px;color:#9a9a9a;">DMM-Viewer2</div><div class="r" style="left:1025px;top:158px;width:10px;height:1px;background:#777;"></div><div class="r" style="left:1070px;top:153px;width:10px;height:10px;border:1px solid #d8d8d8;"></div><svg style="left:1116px;top:153px" width="10" height="10" viewBox="0 0 10 10"><path d="M0 0L10 10M10 0L0 10" stroke="#7a7a7a" stroke-width="1"/></svg><div class="r" style="left:136px;top:172px;width:1008px;height:25px;background:linear-gradient(90deg,#efefef 0px,#f1f1f1 250px,#f6f6f6 600px,#f8f8f8 100%);"></div><div class="t" style="left:152px;top:178.17px;font-family:'Liberation Sans',sans-serif;font-size:12.2px;line-height:12.2px;color:#000;">System(S)</div><div class="t" style="left:228px;top:178.17px;font-family:'Liberation Sans',sans-serif;font-size:12.2px;line-height:12.2px;color:#000;">Parameter(P)</div><div class="t" style="left:321px;top:178.17px;font-family:'Liberation Sans',sans-serif;font-size:12.2px;line-height:12.2px;color:#000;">About(A)</div><div class="r" style="left:140px;top:197px;width:1000px;height:38px;background:#d6e3f1;border-radius:3px;"></div><svg style="left:141px;top:199px" width="70" height="34" viewBox="0 0 70 34">
<defs><linearGradient id="gb" x1="0" y1="0" x2="0" y2="1"><stop offset="0" stop-color="#c9c9c9"/><stop offset=".55" stop-color="#b9b9b9"/><stop offset="1" stop-color="#b3b3b3"/></linearGradient></defs>
<circle cx="16.8" cy="17" r="15.3" fill="url(#gb)" stroke="#a9a9a9" stroke-width="1"/>
<path d="M13 7.7 L24.2 16.5 L13 25 Z" fill="#dedede"/>
<circle cx="53" cy="16.8" r="14.6" fill="url(#gb)" stroke="#a9a9a9" stroke-width="1"/>
<rect x="47.6" y="12" width="11.4" height="11.2" fill="#dedede"/>
</svg><div class="r" style="left:215px;top:202px;width:1px;height:30px;background:#9aa3ad;"></div><div class="r" style="left:216px;top:202px;width:1px;height:30px;background:#fff;"></div><div class="t" style="left:221px;top:210.97px;font-family:'Liberation Sans',sans-serif;font-size:12.2px;line-height:12.2px;color:#43506f;">Mode:</div><div class="r" style="left:259px;top:206px;width:80px;height:22px;background:#f0f0f0;border:1px solid #a9a9a9;"></div><div class="t" style="left:264px;top:210.67px;font-family:'Liberation Sans',sans-serif;font-size:12.2px;line-height:12.2px;color:#6d6d6d;">DataLog</div><svg style="left:328px;top:215px" width="7" height="4"><path d="M0 0H7L3.5 4Z" fill="#555"/></svg><div class="r" style="left:343px;top:202px;width:1px;height:30px;background:#9aa3ad;"></div><div class="r" style="left:344px;top:202px;width:1px;height:30px;background:#fff;"></div><div class="t" style="left:348.5px;top:210.97px;font-family:'Liberation Sans',sans-serif;font-size:12.2px;line-height:12.2px;color:#43506f;">LogUnit:</div><div class="r" style="left:400px;top:206px;width:50px;height:22px;background:#f0f0f0;border:1px solid #a9a9a9;"></div><div class="t" style="left:404px;top:210.67px;font-family:'Liberation Sans',sans-serif;font-size:12.2px;line-height:12.2px;color:#6d6d6d;">Auto</div><svg style="left:439px;top:215px" width="7" height="4"><path d="M0 0H7L3.5 4Z" fill="#555"/></svg><div class="r" style="left:454px;top:202px;width:1px;height:30px;background:#9aa3ad;"></div><div class="r" style="left:455px;top:202px;width:1px;height:30px;background:#fff;"></div><div class="t" style="left:468px;top:210.97px;font-family:'Liberation Sans',sans-serif;font-size:12.2px;line-height:12.2px;color:#43506f;">Interval:</div><div class="r" style="left:515px;top:207px;width:43px;height:21px;background:#f0f0f0;border:1px solid #a5a5a5;"></div><div class="r" style="left:542px;top:209px;width:14px;height:17px;background:#ececec;"></div><div class="r" style="left:542px;top:216.5px;width:14px;height:1px;background:#dadada;"></div><svg style="left:546px;top:211px" width="6" height="14"><path d="M0 3H6L3 0Z M0 8H6L3 11Z" fill="#5a5a5a"/></svg><div class="t" style="left:524.5px;top:212.17px;font-family:'Liberation Sans',sans-serif;font-size:12.2px;line-height:12.2px;color:#6d6d6d;">0</div><div class="t" style="left:564px;top:211.67px;font-family:'Liberation Sans',sans-serif;font-size:12.2px;line-height:12.2px;color:#43506f;">hh</div><div class="r" style="left:583px;top:207px;width:42px;height:21px;background:#f0f0f0;border:1px solid #a5a5a5;"></div><div class="r" style="left:609px;top:209px;width:14px;height:17px;background:#ececec;"></div><div class="r" style="left:609px;top:216.5px;width:14px;height:1px;background:#dadada;"></div><svg style="left:613px;top:211px" width="6" height="14"><path d="M0 3H6L3 0Z M0 8H6L3 11Z" fill="#5a5a5a"/></svg><div class="t" style="left:591px;top:212.17px;font-family:'Liberation Sans',sans-serif;font-size:12.2px;line-height:12.2px;color:#6d6d6d;">0</div><div class="t" style="left:629px;top:211.67px;font-family:'Liberation Sans',sans-serif;font-size:12.2px;line-height:12.2px;color:#43506f;">mm</div><div class="r" style="left:656px;top:207px;width:62px;height:21px;background:#f0f0f0;border:1px solid #a5a5a5;"></div><div class="r" style="left:702px;top:209px;width:14px;height:17px;background:#ececec;"></div><div class="r" style="left:702px;top:216.5px;width:14px;height:1px;background:#dadada;"></div><svg style="left:706px;top:211px" width="6" height="14"><path d="M0 3H6L3 0Z M0 8H6L3 11Z" fill="#5a5a5a"/></svg><div class="t" style="left:662px;top:212.17px;font-family:'Liberation Sans',sans-serif;font-size:12.2px;line-height:12.2px;color:#6d6d6d;">0.010</div><div class="t" style="left:721px;top:211.67px;font-family:'Liberation Sans',sans-serif;font-size:12.2px;line-height:12.2px;color:#43506f;">ss</div><div class="r" style="left:140px;top:238px;width:110px;height:23px;background:#fff;border:1px solid #d9d9d9;border-bottom:none;"></div><div class="t" style="left:148px;top:242.67px;font-family:'Liberation Sans',sans-serif;font-size:12.2px;line-height:12.2px;color:#000;">Instrument Setup</div><div class="r" style="left:140px;top:260px;width:998px;height:551px;background:#fff;border:1px solid #d9d9d9;"></div><div class="r" style="left:144px;top:262px;width:991px;height:545px;border-top:2px solid #6e6e6e;border-left:2px solid #6e6e6e;border-right:1px solid #e3e3e3;border-bottom:1px solid #e3e3e3;"></div><div class="r" style="left:152px;top:270px;width:258px;height:336px;background:#d3d3d3;"></div><div class="r" style="left:153px;top:271px;width:256px;height:90px;border:1px solid #ffa500;border-radius:6px;"></div><div class="r" style="left:153px;top:360px;width:256px;height:89px;border:1px solid #ffa500;border-radius:6px;"></div><div class="r" style="left:153px;top:450px;width:256px;height:20px;border:1px solid #ffa500;border-radius:3.5px;"></div><div class="r" style="left:153px;top:500px;width:256px;height:105px;border:1px solid #ffa500;border-radius:8px;"></div><div class="r" style="left:158px;top:278px;width:33px;height:19px;border:1.6px solid #111;border-radius:5px;"></div><div class="t" style="left:161.5px;top:282.54px;font-family:'Liberation Mono',monospace;font-size:13px;line-height:13px;color:#111;transform:scaleX(1.06);transform-origin:0 0;">1ST</div><div class="t" style="left:193.8px;top:282.54px;font-family:'Liberation Mono',monospace;font-size:13px;line-height:13px;color:#111;transform:scaleX(1.06);transform-origin:0 0;">OFF</div><div class="r" style="left:158px;top:368px;width:33px;height:19px;border:1.6px solid #111;border-radius:5px;"></div><div class="t" style="left:161.5px;top:372.54px;font-family:'Liberation Mono',monospace;font-size:13px;line-height:13px;color:#111;transform:scaleX(1.06);transform-origin:0 0;">2ND</div><div class="t" style="left:193.8px;top:372.54px;font-family:'Liberation Mono',monospace;font-size:13px;line-height:13px;color:#111;transform:scaleX(1.06);transform-origin:0 0;">OFF</div><div class="t" style="left:160.3px;top:453.58px;font-family:'Liberation Mono',monospace;font-size:13.6px;line-height:13.6px;color:#111;transform:scaleX(1.04);transform-origin:0 0;">LogCount:</div><div class="r" style="left:159px;top:479px;width:12px;height:12px;background:#fff;border:1px solid #e6e6e6;"></div><svg style="left:160px;top:480px" width="10" height="10"><path d="M1.2 5.2L4 8L9 2" stroke="#9c9c9c" stroke-width="1.3" fill="none"/></svg><div class="t" style="left:177px;top:478.17px;font-family:'Liberation Sans',sans-serif;font-size:12.2px;line-height:12.2px;color:#4d5676;">Min/Max Display</div><div class="t" style="left:180px;top:514.20px;font-family:'Liberation Mono',monospace;font-size:16.7px;line-height:16.7px;color:#111;transform:scaleX(0.988);transform-origin:0 0;">Minimum: +-------- ---</div><div class="t" style="left:180px;top:534.15px;font-family:'Liberation Mono',monospace;font-size:16.7px;line-height:16.7px;color:#111;transform:scaleX(0.988);transform-origin:0 0;">Maximum: +-------- ---</div><div class="t" style="left:180px;top:554.10px;font-family:'Liberation Mono',monospace;font-size:16.7px;line-height:16.7px;color:#111;transform:scaleX(0.988);transform-origin:0 0;">Average: +-------- ---</div><div class="t" style="left:180px;top:574.05px;font-family:'Liberation Mono',monospace;font-size:16.7px;line-height:16.7px;color:#111;transform:scaleX(0.988);transform-origin:0 0;">Count  : 0</div><div class="r" style="left:419px;top:262px;width:719px;height:342px;border-left:1px solid #dadada;border-bottom:1px solid #dadada;"></div><div class="r" style="left:423px;top:264px;width:712px;height:337px;border-left:1px solid #5a5a5a;border-bottom:1px solid #5a5a5a;"></div><div class="r" style="left:430px;top:300px;width:225px;height:294px;background:#dcdcdc;"></div><div class="r" style="left:437px;top:524px;width:12px;height:12px;background:#fff;border:1px solid #b9b9b9;border-radius:50%;"></div><div class="t" style="left:456px;top:525.17px;font-family:'Liberation Sans',sans-serif;font-size:12.2px;line-height:12.2px;color:#4d5676;">Duration</div><div class="r" style="left:449px;top:546px;width:40px;height:21px;background:#f0f0f0;border:1px solid #c4c4c4;"></div><div class="t" style="left:456px;top:551.67px;font-family:'Liberation Sans',sans-serif;font-size:12.2px;line-height:12.2px;color:#6d6d6d;">0</div><div class="r" style="left:469px;top:548px;width:14px;height:17px;background:#ececec;"></div><div class="r" style="left:469px;top:556px;width:14px;height:1px;background:#dadada;"></div><svg style="left:473px;top:550px" width="6" height="14"><path d="M0 3H6L3 0Z M0 8H6L3 11Z" fill="#5a5a5a"/></svg><div class="r" style="left:437px;top:576px;width:12px;height:12px;background:#fff;border:1px solid #b9b9b9;border-radius:50%;"></div><div class="r" style="left:440px;top:579px;width:6px;height:6px;background:#c8c8c8;border-radius:50%;"></div><div class="t" style="left:456px;top:576.67px;font-family:'Liberation Sans',sans-serif;font-size:12.2px;line-height:12.2px;color:#4d5676;">Manual</div><div class="r" style="left:651px;top:262px;width:487px;height:2px;background:#6e6e6e;"></div><div class="r" style="left:666px;top:267px;width:354px;height:27px;background:#dcdcdc;border-radius:3px;"></div><svg style="left:670px;top:272px" width="16" height="16" viewBox="0 0 16 16"><path d="M1 5.5H6L7 4H14V14H1Z" fill="#d8d8d8" stroke="#c2c2c2" stroke-width=".8"/><path d="M7 2.5h6v3h-6z" fill="#cfcfcf" stroke="#bdbdbd" stroke-width=".6"/></svg><div class="r" style="left:692px;top:271px;width:1px;height:20px;background:#c0c0c0;"></div><div class="r" style="left:693px;top:271px;width:1px;height:20px;background:#fff;"></div><div class="r" style="left:696px;top:269px;width:68px;height:23px;background:#f0f0f0;border:1px solid #a9a9a9;"></div><div class="t" style="left:700px;top:274.67px;font-family:'Liberation Sans',sans-serif;font-size:12.2px;line-height:12.2px;color:#6d6d6d;">1000</div><svg style="left:754px;top:279px" width="7" height="4"><path d="M0 0H7L3.5 4Z" fill="#555"/></svg><div class="r" style="left:768px;top:271px;width:1px;height:20px;background:#c0c0c0;"></div><div class="r" style="left:769px;top:271px;width:1px;height:20px;background:#fff;"></div><svg style="left:776px;top:273px" width="90" height="14" viewBox="0 0 90 14">
<g stroke="#8a8a8a" stroke-width="1.1" fill="none">
<path d="M3 2.5V11.5"/><path d="M11.5 2.5L6.5 7L11.5 11.5"/>
<path d="M33 2.5L28 7L33 11.5"/>
<path d="M53 2.5L58 7L53 11.5"/>
<path d="M77.5 2.5L82.5 7L77.5 11.5"/><path d="M86 2.5V11.5"/>
</g></svg><div class="r" style="left:875px;top:271px;width:1px;height:20px;background:#c0c0c0;"></div><div class="r" style="left:876px;top:271px;width:1px;height:20px;background:#fff;"></div><div class="t" style="left:880.5px;top:274.67px;font-family:'Liberation Sans',sans-serif;font-size:12.2px;line-height:12.2px;color:#6d6d6d;">Page</div><div class="r" style="left:911px;top:269px;width:81px;height:23px;background:#f0f0f0;border:1px solid #a9a9a9;"></div><div class="t" style="left:931.5px;width:40px;text-align:center;top:273.67px;font-family:'Liberation Sans',sans-serif;font-size:12.2px;line-height:12.2px;color:#6d6d6d;">0</div><div class="t" style="left:995px;top:275.67px;font-family:'Liberation Sans',sans-serif;font-size:12.2px;line-height:12.2px;color:#6d6d6d;">/</div><div class="t" style="left:1007px;top:275.67px;font-family:'Liberation Sans',sans-serif;font-size:12.2px;line-height:12.2px;color:#6d6d6d;">0</div><div class="r" style="left:651px;top:296px;width:481px;height:1px;background:#e3e3e3;"></div><div class="r" style="left:651px;top:297px;width:481px;height:1px;background:#6e6e6e;"></div><div class="r" style="left:1131px;top:297px;width:1px;height:304px;background:#6e6e6e;"></div><div class="r" style="left:651px;top:600px;width:481px;height:1px;background:#6e6e6e;"></div><div class="r" style="left:1136px;top:261px;width:1px;height:343px;background:#e3e3e3;"></div><div class="r" style="left:651px;top:603px;width:487px;height:1px;background:#e3e3e3;"></div><div class="r" style="left:653px;top:304px;width:2px;height:296px;background:#e6e6e6;"></div><div class="r" style="left:658px;top:304px;width:471px;height:294px;background:#ababab;border:2px solid #000;border-right-width:1px;border-bottom-width:1px;"></div><div class="r" style="left:660px;top:306px;width:467px;height:21px;background:#fff;"></div><div class="r" style="left:663px;top:307px;width:1px;height:20px;background:#d5d5d5;"></div><div class="r" style="left:724px;top:307px;width:1px;height:20px;background:#e3e3e3;"></div><div class="r" style="left:847px;top:307px;width:1px;height:20px;background:#e3e3e3;"></div><div class="r" style="left:953px;top:307px;width:1px;height:20px;background:#e3e3e3;"></div><div class="r" style="left:987px;top:307px;width:1px;height:20px;background:#e3e3e3;"></div><div class="r" style="left:1093px;top:307px;width:1px;height:20px;background:#e3e3e3;"></div><div class="t" style="left:635.0px;width:120px;text-align:center;top:309.84px;font-family:'Liberation Sans',sans-serif;font-size:12px;line-height:12px;color:#000;">Index</div><div class="t" style="left:726.0px;width:120px;text-align:center;top:309.84px;font-family:'Liberation Sans',sans-serif;font-size:12px;line-height:12px;color:#000;">Time</div><div class="t" style="left:841.0px;width:120px;text-align:center;top:309.84px;font-family:'Liberation Sans',sans-serif;font-size:12px;line-height:12px;color:#000;">1ST Value</div><div class="t" style="left:910.5px;width:120px;text-align:center;top:309.84px;font-family:'Liberation Sans',sans-serif;font-size:12px;line-height:12px;color:#000;">Unit1</div><div class="t" style="left:980.5px;width:120px;text-align:center;top:309.84px;font-family:'Liberation Sans',sans-serif;font-size:12px;line-height:12px;color:#000;">2ND Value</div><div class="t" style="left:1050.5px;width:120px;text-align:center;top:309.84px;font-family:'Liberation Sans',sans-serif;font-size:12px;line-height:12px;color:#000;">Unit2</div><div class="r" style="left:150px;top:611px;width:985px;height:196px;background:#dcdcdc;"></div><div class="t" style="left:159px;top:613.88px;font-family:'Liberation Mono',monospace;font-size:13.2px;line-height:13.2px;color:#3c3c3c;transform:scaleX(0.884);transform-origin:0 0;">Setup</div><div class="r" style="left:158px;top:631px;width:238px;height:170px;background:#afecec;"></div><div class="r" style="left:158px;top:639px;width:237px;height:161px;border:1px solid #dcdcdc;"></div><div class="r" style="left:165px;top:638px;width:145.0px;height:3px;background:#afecec;"></div><div class="t" style="left:166.8px;top:633.88px;font-family:'Liberation Mono',monospace;font-size:13.2px;line-height:13.2px;color:#197a86;transform:scaleX(0.884);transform-origin:0 0;">Primary Display(1ST)</div><div class="r" style="left:402px;top:631px;width:238px;height:170px;background:#afecec;"></div><div class="r" style="left:402px;top:639px;width:237px;height:161px;border:1px solid #dcdcdc;"></div><div class="r" style="left:409px;top:638px;width:159.0px;height:3px;background:#afecec;"></div><div class="t" style="left:410.8px;top:633.88px;font-family:'Liberation Mono',monospace;font-size:13.2px;line-height:13.2px;color:#197a86;transform:scaleX(0.884);transform-origin:0 0;">Secondary Display(2ND)</div><div class="r" style="left:646px;top:631px;width:238px;height:72px;background:#afecec;"></div><div class="r" style="left:646px;top:639px;width:237px;height:63px;border:1px solid #dcdcdc;"></div><div class="r" style="left:653px;top:638px;width:26.0px;height:3px;background:#afecec;"></div><div class="t" style="left:654.8px;top:633.88px;font-family:'Liberation Mono',monospace;font-size:13.2px;line-height:13.2px;color:#197a86;transform:scaleX(0.884);transform-origin:0 0;">REL</div><div class="r" style="left:890px;top:631px;width:238px;height:72px;background:#afecec;"></div><div class="r" style="left:890px;top:639px;width:237px;height:63px;border:1px solid #dcdcdc;"></div><div class="r" style="left:897px;top:638px;width:47.0px;height:3px;background:#afecec;"></div><div class="t" style="left:898.8px;top:633.88px;font-family:'Liberation Mono',monospace;font-size:13.2px;line-height:13.2px;color:#197a86;transform:scaleX(0.884);transform-origin:0 0;">Filter</div><div class="r" style="left:646px;top:709px;width:238px;height:92px;background:#afecec;"></div><div class="r" style="left:646px;top:717px;width:237px;height:83px;border:1px solid #dcdcdc;"></div><div class="r" style="left:653px;top:716px;width:33.0px;height:3px;background:#afecec;"></div><div class="t" style="left:654.8px;top:711.88px;font-family:'Liberation Mono',monospace;font-size:13.2px;line-height:13.2px;color:#197a86;transform:scaleX(0.884);transform-origin:0 0;">Math</div><div class="r" style="left:890px;top:709px;width:238px;height:92px;background:#afecec;"></div><div class="r" style="left:890px;top:717px;width:237px;height:83px;border:1px solid #dcdcdc;"></div><div class="r" style="left:897px;top:716px;width:54.0px;height:3px;background:#afecec;"></div><div class="t" style="left:898.8px;top:711.88px;font-family:'Liberation Mono',monospace;font-size:13.2px;line-height:13.2px;color:#197a86;transform:scaleX(0.884);transform-origin:0 0;">Trigger</div><div class="t" style="left:166.7px;top:657.48px;font-family:'Liberation Mono',monospace;font-size:13.2px;line-height:13.2px;color:#197a86;transform:scaleX(0.884);transform-origin:0 0;">Function</div><div class="r" style="left:233px;top:651px;width:157px;height:24px;background:#cdcdcd;border:1px solid #c0c0c0;"></div><div class="t" style="left:237.5px;top:657.88px;font-family:'Liberation Mono',monospace;font-size:13.2px;line-height:13.2px;color:#707070;transform:scaleX(0.884);transform-origin:0 0;">None</div><svg style="left:373px;top:661.0px" width="10" height="6"><path d="M0.5 0.5L5 5L9.5 0.5" stroke="#9a9a9a" stroke-width="1" fill="none"/></svg><div class="t" style="left:166.7px;top:687.08px;font-family:'Liberation Mono',monospace;font-size:13.2px;line-height:13.2px;color:#197a86;transform:scaleX(0.884);transform-origin:0 0;">Range</div><div class="r" style="left:223px;top:680px;width:81px;height:24px;background:#cdcdcd;border:1px solid #c0c0c0;"></div><div class="t" style="left:227.5px;top:686.88px;font-family:'Liberation Mono',monospace;font-size:13.2px;line-height:13.2px;color:#707070;transform:scaleX(0.884);transform-origin:0 0;">None</div><svg style="left:287px;top:690.0px" width="10" height="6"><path d="M0.5 0.5L5 5L9.5 0.5" stroke="#9a9a9a" stroke-width="1" fill="none"/></svg><div class="t" style="left:166.7px;top:717.08px;font-family:'Liberation Mono',monospace;font-size:13.2px;line-height:13.2px;color:#197a86;transform:scaleX(0.884);transform-origin:0 0;">Speed</div><div class="r" style="left:223px;top:709px;width:81px;height:24px;background:#cdcdcd;border:1px solid #c0c0c0;"></div><div class="t" style="left:227.5px;top:715.88px;font-family:'Liberation Mono',monospace;font-size:13.2px;line-height:13.2px;color:#707070;transform:scaleX(0.884);transform-origin:0 0;">None</div><svg style="left:287px;top:719.0px" width="10" height="6"><path d="M0.5 0.5L5 5L9.5 0.5" stroke="#9a9a9a" stroke-width="1" fill="none"/></svg><div class="t" style="left:410.6px;top:658.38px;font-family:'Liberation Mono',monospace;font-size:13.2px;line-height:13.2px;color:#197a86;transform:scaleX(0.884);transform-origin:0 0;">Function</div><div class="r" style="left:477px;top:651px;width:157px;height:24px;background:#cdcdcd;border:1px solid #c0c0c0;"></div><div class="t" style="left:481.5px;top:657.88px;font-family:'Liberation Mono',monospace;font-size:13.2px;line-height:13.2px;color:#707070;transform:scaleX(0.884);transform-origin:0 0;">Off</div><svg style="left:617px;top:661.0px" width="10" height="6"><path d="M0.5 0.5L5 5L9.5 0.5" stroke="#9a9a9a" stroke-width="1" fill="none"/></svg><div class="r" style="left:652px;top:656px;width:13px;height:13px;background:#fff;border:1px solid #dcdcdc;"></div><div class="t" style="left:671.5px;top:657.48px;font-family:'Liberation Mono',monospace;font-size:13.2px;line-height:13.2px;color:#197a86;transform:scaleX(0.884);transform-origin:0 0;">1ST</div><div class="r" style="left:652px;top:678px;width:13px;height:13px;background:#fff;border:1px solid #dcdcdc;"></div><div class="t" style="left:671.5px;top:680.38px;font-family:'Liberation Mono',monospace;font-size:13.2px;line-height:13.2px;color:#197a86;transform:scaleX(0.884);transform-origin:0 0;">2ND</div><div class="r" style="left:706px;top:650px;width:114px;height:22px;background:#f0f0f0;border:2px solid #fff;outline:1px solid #d0d0d0;outline-offset:-1px;"></div><div class="t" style="left:709px;top:655.48px;font-family:'Liberation Mono',monospace;font-size:13.2px;line-height:13.2px;color:#707070;transform:scaleX(0.884);transform-origin:0 0;">0.00000000E+00</div><div class="r" style="left:706px;top:673px;width:114px;height:23px;background:#f0f0f0;border:2px solid #fff;outline:1px solid #d0d0d0;outline-offset:-1px;"></div><div class="t" style="left:709px;top:678.48px;font-family:'Liberation Mono',monospace;font-size:13.2px;line-height:13.2px;color:#707070;transform:scaleX(0.884);transform-origin:0 0;">0.00000000E+00</div><div class="r" style="left:826px;top:655px;width:13px;height:13px;background:#fff;border:1px solid #dcdcdc;"></div><div class="t" style="left:845.2px;top:656.48px;font-family:'Liberation Mono',monospace;font-size:13.2px;line-height:13.2px;color:#197a86;transform:scaleX(0.884);transform-origin:0 0;">Auto</div><div class="r" style="left:826px;top:678px;width:13px;height:13px;background:#fff;border:1px solid #dcdcdc;"></div><div class="t" style="left:845.2px;top:679.48px;font-family:'Liberation Mono',monospace;font-size:13.2px;line-height:13.2px;color:#197a86;transform:scaleX(0.884);transform-origin:0 0;">Auto</div><div class="r" style="left:896px;top:656px;width:13px;height:13px;background:#fff;border:1px solid #dcdcdc;"></div><div class="t" style="left:915.5px;top:657.48px;font-family:'Liberation Mono',monospace;font-size:13.2px;line-height:13.2px;color:#197a86;transform:scaleX(0.884);transform-origin:0 0;">1ST</div><div class="r" style="left:896px;top:678px;width:13px;height:13px;background:#fff;border:1px solid #dcdcdc;"></div><div class="t" style="left:915.5px;top:680.38px;font-family:'Liberation Mono',monospace;font-size:13.2px;line-height:13.2px;color:#197a86;transform:scaleX(0.884);transform-origin:0 0;">2ND</div><div class="r" style="left:950px;top:648px;width:64px;height:24px;background:#cdcdcd;border:1px solid #c0c0c0;"></div><div class="t" style="left:954.5px;top:654.88px;font-family:'Liberation Mono',monospace;font-size:13.2px;line-height:13.2px;color:#707070;transform:scaleX(0.884);transform-origin:0 0;">MOV</div><svg style="left:997px;top:658.0px" width="10" height="6"><path d="M0.5 0.5L5 5L9.5 0.5" stroke="#9a9a9a" stroke-width="1" fill="none"/></svg><div class="r" style="left:950px;top:672px;width:64px;height:24px;background:#cdcdcd;border:1px solid #c0c0c0;"></div><div class="t" style="left:954.5px;top:678.88px;font-family:'Liberation Mono',monospace;font-size:13.2px;line-height:13.2px;color:#707070;transform:scaleX(0.884);transform-origin:0 0;">MOV</div><svg style="left:997px;top:682.0px" width="10" height="6"><path d="M0.5 0.5L5 5L9.5 0.5" stroke="#9a9a9a" stroke-width="1" fill="none"/></svg><div class="t" style="left:1023px;top:654.88px;font-family:'Liberation Mono',monospace;font-size:13.2px;line-height:13.2px;color:#197a86;transform:scaleX(0.884);transform-origin:0 0;">Count</div><div class="t" style="left:1023px;top:678.88px;font-family:'Liberation Mono',monospace;font-size:13.2px;line-height:13.2px;color:#197a86;transform:scaleX(0.884);transform-origin:0 0;">Count</div><div class="r" style="left:1069px;top:648px;width:51px;height:23px;background:#f0f0f0;border:1px solid #b4b4b4;"></div><div class="r" style="left:1103px;top:650px;width:15px;height:19px;background:#ececec;border:1px solid #e4e4e4;"></div><div class="r" style="left:1103px;top:659.0px;width:15px;height:1px;background:#dadada;"></div><svg style="left:1107.5px;top:653px" width="6" height="14"><path d="M0 3H6L3 0Z M0 10H6L3 13Z" fill="#5a5a5a"/></svg><div class="t" style="left:1072px;top:654.38px;font-family:'Liberation Mono',monospace;font-size:13.2px;line-height:13.2px;color:#707070;transform:scaleX(0.884);transform-origin:0 0;">2</div><div class="r" style="left:1069px;top:672px;width:51px;height:23px;background:#f0f0f0;border:1px solid #b4b4b4;"></div><div class="r" style="left:1103px;top:674px;width:15px;height:19px;background:#ececec;border:1px solid #e4e4e4;"></div><div class="r" style="left:1103px;top:683.0px;width:15px;height:1px;background:#dadada;"></div><svg style="left:1107.5px;top:677px" width="6" height="14"><path d="M0 3H6L3 0Z M0 10H6L3 13Z" fill="#5a5a5a"/></svg><div class="t" style="left:1072px;top:678.38px;font-family:'Liberation Mono',monospace;font-size:13.2px;line-height:13.2px;color:#707070;transform:scaleX(0.884);transform-origin:0 0;">2</div><div class="t" style="left:722.3px;top:731.10px;font-family:'Liberation Sans',sans-serif;font-size:11.7px;line-height:11.7px;color:#000;"></div><div class="t" style="left:655px;top:730.68px;font-family:'Liberation Mono',monospace;font-size:13.2px;line-height:13.2px;color:#197a86;transform:scaleX(0.884);transform-origin:0 0;">Function</div><div class="r" style="left:722px;top:725px;width:88px;height:24px;background:#cdcdcd;border:1px solid #c0c0c0;"></div><div class="t" style="left:726.5px;top:731.88px;font-family:'Liberation Mono',monospace;font-size:13.2px;line-height:13.2px;color:#707070;transform:scaleX(0.884);transform-origin:0 0;">Off</div><svg style="left:793px;top:735.0px" width="10" height="6"><path d="M0.5 0.5L5 5L9.5 0.5" stroke="#9a9a9a" stroke-width="1" fill="none"/></svg><div class="r" style="left:896px;top:733px;width:13px;height:13px;background:#fff;border:1px solid #dcdcdc;"></div><div class="t" style="left:915.5px;top:732.68px;font-family:'Liberation Mono',monospace;font-size:13.2px;line-height:13.2px;color:#197a86;transform:scaleX(0.884);transform-origin:0 0;">Trigger Auto</div><div class="t" style="left:907.4px;top:755.28px;font-family:'Liberation Mono',monospace;font-size:13.2px;line-height:13.2px;color:#197a86;transform:scaleX(0.884);transform-origin:0 0;">1ST Delay</div><div class="t" style="left:907.4px;top:776.18px;font-family:'Liberation Mono',monospace;font-size:13.2px;line-height:13.2px;color:#197a86;transform:scaleX(0.884);transform-origin:0 0;">2ND Delay</div><div class="r" style="left:976px;top:749px;width:95px;height:22px;background:#f0f0f0;border:1px solid #d2d2d2;"></div><div class="t" style="left:979px;top:754.88px;font-family:'Liberation Mono',monospace;font-size:13.2px;line-height:13.2px;color:#707070;transform:scaleX(0.884);transform-origin:0 0;">0.0</div><div class="r" style="left:976px;top:771px;width:95px;height:22px;background:#f0f0f0;border:1px solid #d2d2d2;"></div><div class="t" style="left:979px;top:775.88px;font-family:'Liberation Mono',monospace;font-size:13.2px;line-height:13.2px;color:#707070;transform:scaleX(0.884);transform-origin:0 0;">-----</div><div class="t" style="left:1080.7px;top:756.28px;font-family:'Liberation Mono',monospace;font-size:13.2px;line-height:13.2px;color:#197a86;transform:scaleX(0.884);transform-origin:0 0;">Sec</div><div class="t" style="left:1080.7px;top:777.18px;font-family:'Liberation Mono',monospace;font-size:13.2px;line-height:13.2px;color:#197a86;transform:scaleX(0.884);transform-origin:0 0;">Sec</div><div class="r" style="left:137px;top:813px;width:149px;height:18px;border:1px solid #c8c8c8;border-right-color:#a0a0a0;border-bottom-color:#a0a0a0;background:#f0f0f0;"></div><div class="r" style="left:287px;top:813px;width:99px;height:18px;border:1px solid #c8c8c8;border-right-color:#a0a0a0;border-bottom-color:#a0a0a0;"></div><div class="r" style="left:387px;top:813px;width:299px;height:18px;border:1px solid #c8c8c8;border-right-color:#a0a0a0;border-bottom-color:#a0a0a0;"></div><div class="t" style="left:155.5px;top:816.67px;font-family:'Liberation Sans',sans-serif;font-size:12.2px;line-height:12.2px;color:#000;">2025/02/27 19:04:36</div><div class="t" style="left:291.5px;width:90px;text-align:center;top:816.67px;font-family:'Liberation Sans',sans-serif;font-size:12.2px;line-height:12.2px;color:#000;">Connect</div><div class="t" style="left:405px;top:816.67px;font-family:'Liberation Sans',sans-serif;font-size:12.2px;line-height:12.2px;color:#000;">GWInstek,GDM79061,GEX891986,M1.13_S1.15</div><div class="r" style="left:236px;top:234px;width:416px;height:279px;background:#f0f0f0;border:1px solid #9d9d9d;box-shadow:0 1px 4px rgba(0,0,0,.08);"></div><div class="r" style="left:237px;top:235px;width:414px;height:25px;background:#fff;"></div><svg style="left:241px;top:240px" width="14" height="14" viewBox="0 0 14 14">
<rect x=".5" y=".5" width="13" height="13" fill="#fff" stroke="#c4c4c4"/>
<path d="M5.5 1v13M1 4.5h4.5M1 10.5h4.5M3 10.5V14M11 7.5v6" stroke="#d0d0d0" stroke-width=".8"/>
<rect x="6" y="1" width="7" height="7" fill="#f5c518" stroke="#b58a00" stroke-width=".8"/>
<rect x="6.8" y="1.8" width="4" height="4" fill="#ffe78a"/>
<rect x="1.3" y="5" width="4" height="5.2" fill="#d42a1a" stroke="#8a0e05" stroke-width=".6"/>
<rect x="6" y="8.8" width="5" height="4.6" fill="#4f8ff0" stroke="#2a5cc0" stroke-width=".6"/>
</svg><div class="t" style="left:261.5px;top:240.67px;font-family:'Liberation Sans',sans-serif;font-size:12.2px;line-height:12.2px;color:#999999;">Connect</div><svg style="left:631px;top:242px" width="11" height="11"><path d="M.5 .5L10.5 10.5M10.5 .5L.5 10.5" stroke="#555" stroke-width="1"/></svg><div class="r" style="left:249px;top:272px;width:391px;height:78px;background:#e3e3e3;"></div><div class="r" style="left:250px;top:279px;width:389px;height:70px;border-top:1px solid #d6d6d6;"></div><div class="r" style="left:256px;top:273px;width:48px;height:12px;background:#e3e3e3;"></div><div class="t" style="left:258.6px;top:273.67px;font-family:'Liberation Sans',sans-serif;font-size:12.2px;line-height:12.2px;color:#000;">Interface</div><div class="t" style="left:259px;top:294.17px;font-family:'Liberation Sans',sans-serif;font-size:12.2px;line-height:12.2px;color:#000;">VISA Name</div><div class="r" style="left:330px;top:289px;width:304px;height:23px;background:#efefef;border:1px solid #dcdcdc;box-shadow:inset 0 0 0 1px #fff;"></div><div class="r" style="left:614px;top:291px;width:18px;height:19px;background:#fff;"></div><div class="t" style="left:333px;top:294.17px;font-family:'Liberation Sans',sans-serif;font-size:12.2px;line-height:12.2px;color:#777;">COM3</div><svg style="left:619px;top:298px" width="10" height="6"><path d="M.5 .5L5 5L9.5 .5" stroke="#8a8a8a" stroke-width="1" fill="none"/></svg><div class="t" style="left:259px;top:324.17px;font-family:'Liberation Sans',sans-serif;font-size:12.2px;line-height:12.2px;color:#000;">RS232 BaudRate</div><div class="r" style="left:365px;top:319px;width:69px;height:23px;background:#efefef;border:1px solid #dcdcdc;box-shadow:inset 0 0 0 1px #fff;"></div><div class="r" style="left:414px;top:321px;width:18px;height:19px;background:#fff;"></div><div class="t" style="left:367.5px;top:324.47px;font-family:'Liberation Sans',sans-serif;font-size:12.2px;line-height:12.2px;color:#888;">115200</div><svg style="left:419px;top:328px" width="10" height="6"><path d="M.5 .5L5 5L9.5 .5" stroke="#8a8a8a" stroke-width="1" fill="none"/></svg><div class="r" style="left:249px;top:357px;width:391px;height:70px;background:#e3e3e3;"></div><div class="r" style="left:250px;top:364px;width:389px;height:62px;border-top:1px solid #d6d6d6;"></div><div class="r" style="left:256px;top:358px;width:58px;height:12px;background:#e3e3e3;"></div><div class="t" style="left:258.6px;top:358.67px;font-family:'Liberation Sans',sans-serif;font-size:12.2px;line-height:12.2px;color:#000;">Parameter</div><div class="t" style="left:259px;top:378.67px;font-family:'Liberation Sans',sans-serif;font-size:12.2px;line-height:12.2px;color:#000;">VISA TimeOut</div><div class="r" style="left:365px;top:374px;width:59px;height:21px;background:#fff;border:1px solid #7a7a7a;"></div><div class="t" style="left:365.5px;width:58px;text-align:center;top:379.67px;font-family:'Liberation Sans',sans-serif;font-size:12.2px;line-height:12.2px;color:#000;">3000</div><div class="t" style="left:433px;top:379.67px;font-family:'Liberation Sans',sans-serif;font-size:12.2px;line-height:12.2px;color:#000;">ms</div><div class="r" style="left:462px;top:373px;width:72px;height:23px;background:#cccccc;border:1px solid #bfbfbf;"></div><div class="t" style="left:462.0px;width:72px;text-align:center;top:379.67px;font-family:'Liberation Sans',sans-serif;font-size:12.2px;line-height:12.2px;color:#6d6d6d;">Change</div><div class="r" style="left:259px;top:402px;width:13px;height:13px;background:#fff;border:1px solid #333;"></div><div class="t" style="left:278px;top:402.97px;font-family:'Liberation Sans',sans-serif;font-size:12.2px;line-height:12.2px;color:#000;">Reset</div><div class="r" style="left:331px;top:447px;width:85px;height:23px;background:#e1e1e1;border:2px solid #0078d7;"></div><div class="t" style="left:331.0px;width:85px;text-align:center;top:452.67px;font-family:'Liberation Sans',sans-serif;font-size:12.2px;line-height:12.2px;color:#000;">Connect</div><div class="r" style="left:462px;top:447px;width:85px;height:23px;background:#e1e1e1;border:1px solid #adadad;"></div><div class="t" style="left:471px;top:452.67px;font-family:'Liberation Sans',sans-serif;font-size:12.2px;line-height:12.2px;color:#000;">Disconnect</div><div class="r" style="left:237px;top:490px;width:414px;height:22px;background:#f0f0f0;border-top:1px solid #d7d7d7;"></div><div class="t" style="left:241.5px;top:495.67px;font-family:'Liberation Sans',sans-serif;font-size:12.2px;line-height:12.2px;color:#000;">Connect  COM:115200,N,8,1  T:3000ms</div><div class="r" style="left:482px;top:444px;width:323px;height:148px;background:#fff;border:1px solid #555;box-shadow:0 1px 4px rgba(0,0,0,.1);"></div><div class="t" style="left:486.6px;top:450.97px;font-family:'Liberation Sans',sans-serif;font-size:12.2px;line-height:12.2px;color:#000;">Information</div><svg style="left:783px;top:452px" width="11" height="11"><path d="M.5 .5L10.5 10.5M10.5 .5L.5 10.5" stroke="#111" stroke-width="1.1"/></svg><svg style="left:504px;top:493px" width="32" height="32" viewBox="0 0 32 32">
<circle cx="16" cy="16" r="15" fill="#0069cc" stroke="#0b57a8" stroke-width=".8"/>
<rect x="15" y="7" width="2" height="2.4" fill="#fff"/><rect x="15" y="11.5" width="2" height="13" fill="#fff"/>
</svg><div class="t" style="left:545.4px;top:504.57px;font-family:'Liberation Sans',sans-serif;font-size:11.5px;line-height:11.5px;color:#000;">Product Model(GDM79061) is not supported</div><div class="r" style="left:483px;top:548px;width:321px;height:42px;background:#f0f0f0;"></div><div class="r" style="left:714px;top:559px;width:73px;height:21px;background:#e1e1e1;border:2px solid #0078d7;"></div><div class="t" style="left:714.0px;width:73px;text-align:center;top:564.27px;font-family:'Liberation Sans',sans-serif;font-size:11.5px;line-height:11.5px;color:#000;">OK</div><div class="r" style="left:0px;top:984px;width:1280px;height:40px;background:#20333e;"></div><svg style="left:15px;top:995px" width="18" height="18" viewBox="0 0 18 18">
<path d="M1 2.6L7.6 1.7V8.4H1z M8.6 1.55L17 .4V8.4H8.6z M1 9.4H7.6V16.1L1 15.2z M8.6 9.4H17V17.4L8.6 16.25z" fill="#fff"/></svg><div class="r" style="left:48px;top:984px;width:288px;height:40px;background:#f2f2f2;"></div><svg style="left:59px;top:995px" width="20" height="18" viewBox="0 0 20 18"><circle cx="11.6" cy="6.8" r="5.6" stroke="#1a1a1a" stroke-width="1.3" fill="none"/><path d="M7.6 10.9L1.5 17" stroke="#1a1a1a" stroke-width="1.4"/></svg><div class="t" style="left:88.5px;top:997.30px;font-family:'Liberation Sans',sans-serif;font-size:15px;line-height:15px;color:#222;">Поиск</div><svg style="left:350px;top:995px" width="19" height="17" viewBox="0 0 19 17"><g stroke="#fff" stroke-width="1.3" fill="none">
<path d="M1 1.5H12M1 15.5H12"/><rect x="2.5" y="4.5" width="8" height="8"/><path d="M15.5 1V5M15.5 12V16"/><rect x="14.5" y="7" width="2.5" height="3" fill="#fff"/></g></svg><svg style="left:398px;top:992px" width="26" height="25" viewBox="0 0 26 25">
<circle cx="13" cy="13" r="11.5" fill="#1b74e0"/><path d="M3 9c1-5 6-8.5 11-8.5 5.5 0 10 3.5 11 8.5-3-3-7-3.5-10-3-4 .5-8 1.5-12 3z" fill="#0b4fb0"/><path d="M1.5 12c0 5 3 9 7 11" stroke="#0b4fb0" stroke-width="2" fill="none"/>
<ellipse cx="13.5" cy="14.5" rx="6.5" ry="5" fill="#e6f1ff"/><path d="M7.5 12l6 4 6-4" stroke="#8ab8ee" stroke-width="1.2" fill="none"/></svg><svg style="left:448px;top:994px" width="24" height="20" viewBox="0 0 24 20">
<path d="M1 1h8l2 2h12v16H1z" fill="#e9a92a"/><path d="M1 5h22v14H1z" fill="#fcd46a"/><path d="M7 12h10v7h-3v-4h-4v4H7z" fill="#2c82d6"/></svg><svg style="left:497px;top:992px" width="24" height="24" viewBox="0 0 24 24">
<circle cx="12" cy="12" r="12" fill="#fff"/><path d="M5 5.5l6.5 7V20h3V12.5L19.5 5.5" stroke="#fc3f1d" stroke-width="2.6" fill="none"/><path d="M15.5 9l3.5-3.5" stroke="#ff5ec8" stroke-width="2.6"/></svg><div class="r" style="left:489px;top:1022px;width:40px;height:2px;background:#76b9ed;"></div><div class="r" style="left:534px;top:984px;width:44px;height:40px;background:#44545e;"></div><div class="r" style="left:578px;top:984px;width:4px;height:40px;background:#34434d;"></div><div class="r" style="left:534px;top:1022px;width:48px;height:2px;background:#76b9ed;"></div><svg style="left:546px;top:992px" width="22" height="22" viewBox="0 0 22 22">
<rect x="0" y="0" width="22" height="22" fill="#f7f7f7"/><rect x="1.5" y="11" width="19" height="9.5" fill="#fff" stroke="#aaa" stroke-width=".8"/>
<path d="M3.5 18C5 16 6.5 16.5 8 17s3-2 5-1.5 3.5-1.5 5.5-2" stroke="#333" stroke-width=".9" fill="none"/>
<text x="11" y="5" font-family="Liberation Sans" font-size="4.2" text-anchor="middle" fill="#555">DMM</text><text x="11" y="9.5" font-family="Liberation Sans" font-size="4.2" text-anchor="middle" fill="#555">VIEWER2</text></svg><svg style="left:1010px;top:999px" width="14" height="9"><path d="M1 8L7 1.5L13 8" stroke="#fff" stroke-width="1.2" fill="none"/></svg><svg style="left:1032px;top:996px" width="18" height="16" viewBox="0 0 26 25">
<circle cx="13" cy="13" r="11.5" fill="#1b74e0"/><path d="M3 9c1-5 6-8.5 11-8.5 5.5 0 10 3.5 11 8.5-3-3-7-3.5-10-3-4 .5-8 1.5-12 3z" fill="#0b4fb0"/>
<ellipse cx="13.5" cy="14.5" rx="6.5" ry="5" fill="#e6f1ff"/></svg><svg style="left:1057px;top:996px" width="17" height="17" viewBox="0 0 17 17">
<path d="M7 .5L13.5 3v5c0 4-3 6.5-6.5 8C3.5 14.5.5 12 .5 8V3z" fill="#fff"/><path d="M7 2.2V14C4.5 13 2.2 11 2.2 8V4.2zM7 8H12c-.3 2.5-2 4.5-5 6z" fill="#111"/>
<circle cx="12.5" cy="12.5" r="4" fill="#21a54a"/><path d="M10.5 12.5l1.5 1.5 2.5-3" stroke="#fff" stroke-width="1.1" fill="none"/></svg><svg style="left:1081px;top:997px" width="17" height="15" viewBox="0 0 17 15"><g stroke="#fff" stroke-width="1.1" fill="none">
<rect x="4.5" y="3.5" width="12" height="8.5"/><path d="M10.5 12v2.5M7 14.5h7"/><rect x=".5" y=".5" width="3.5" height="5"/><path d="M2.2 5.5v9"/></g></svg><svg style="left:1105px;top:997px" width="17" height="15" viewBox="0 0 17 15"><g stroke="#fff" stroke-width="1.1" fill="none">
<path d="M.5 5h3l4-4v13l-4-4h-3z"/><path d="M10 5c1 1.5 1 3.5 0 5M12.5 3c2 2.5 2 6.5 0 9M15 1c3 3.5 3 9.5 0 13"/></g></svg><div class="t" style="left:1132px;top:997.84px;font-family:'Liberation Sans',sans-serif;font-size:12px;line-height:12px;color:#fff;">РУС</div><div class="t" style="left:1163.6px;width:60px;text-align:center;top:989.52px;font-family:'Liberation Sans',sans-serif;font-size:11.2px;line-height:11.2px;color:#fff;">19:04</div><div class="t" style="left:1153.8px;width:80px;text-align:center;top:1007.32px;font-family:'Liberation Sans',sans-serif;font-size:11.2px;line-height:11.2px;color:#fff;">27.02.2025</div><svg style="left:1238px;top:996px" width="18" height="17" viewBox="0 0 18 17"><path d="M.6 .6H17.4V12.4H11L8 15.8 5 12.4H.6z" stroke="#fff" stroke-width="1.2" fill="none"/></svg><div class="r" style="left:1275px;top:984px;width:1px;height:40px;background:#4a5a66;"></div>
</body></html>
